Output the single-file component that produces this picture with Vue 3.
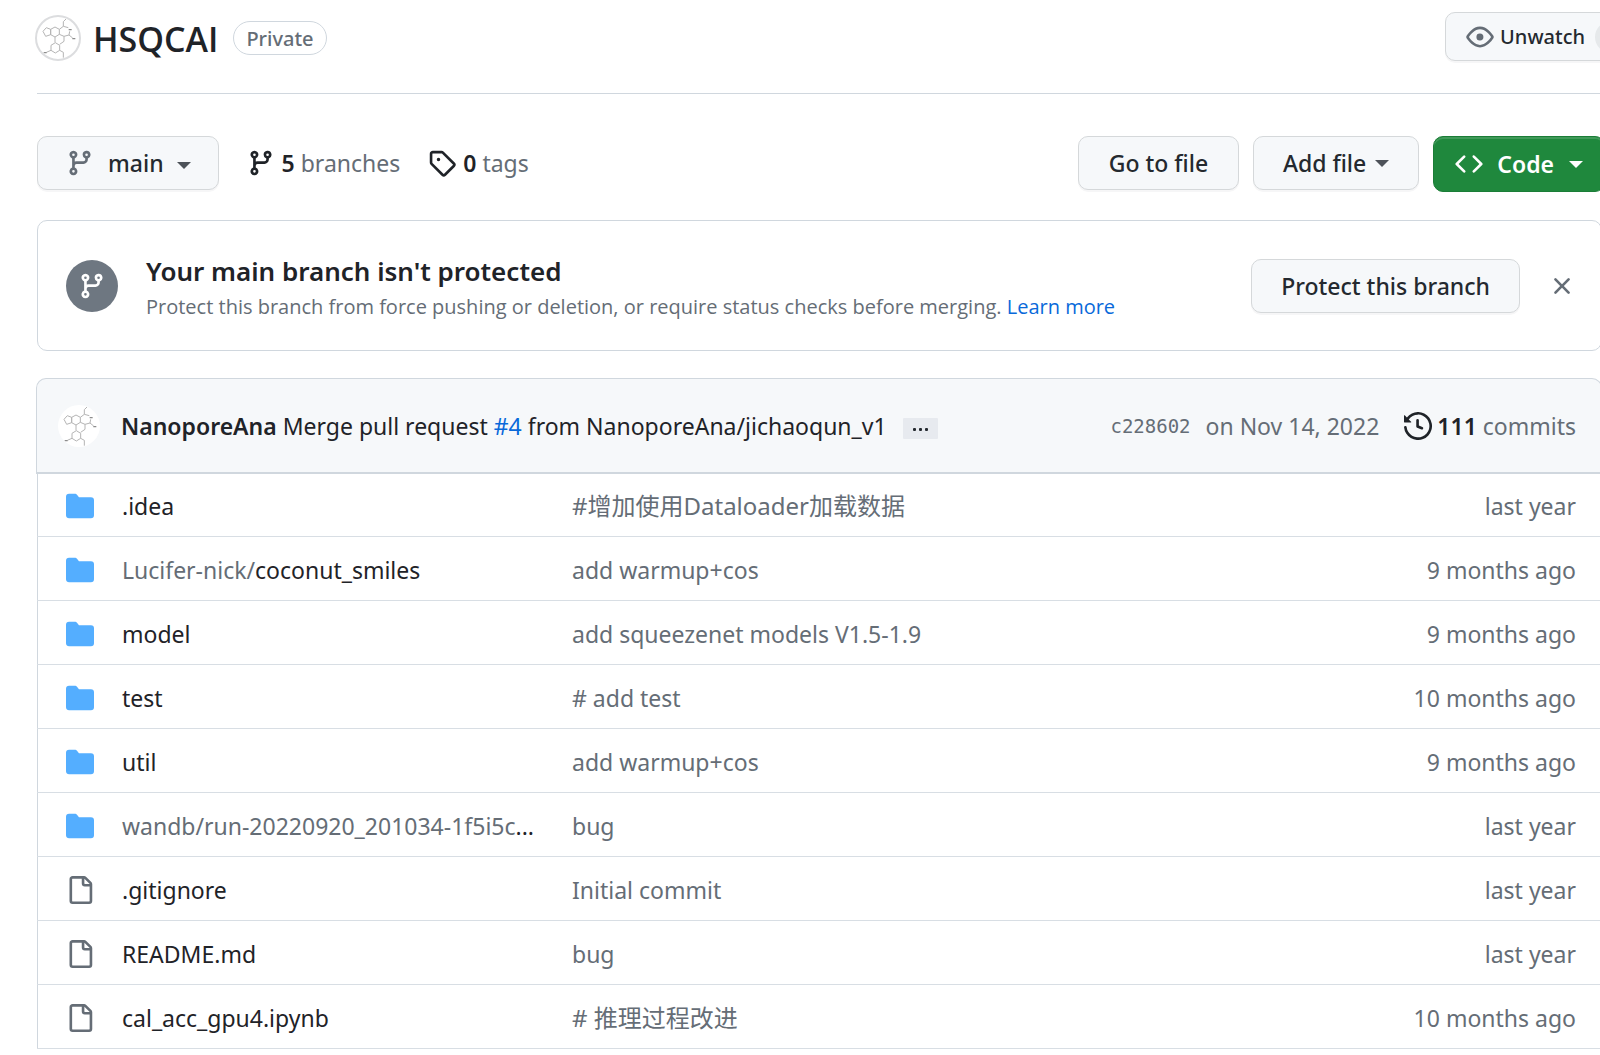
<script setup>
import { h } from 'vue'

const paths = {
  branch: 'M9.5 3.25a2.25 2.25 0 1 1 3 2.122V6A2.5 2.5 0 0 1 10 8.5H6a1 1 0 0 0-1 1v1.128a2.251 2.251 0 1 1-1.5 0V5.372a2.25 2.25 0 1 1 1.5 0v1.836A2.493 2.493 0 0 1 6 7h4a1 1 0 0 0 1-1v-.628A2.25 2.25 0 0 1 9.5 3.25Zm-6 0a.75.75 0 1 0 1.5 0 .75.75 0 0 0-1.5 0Zm8.25-.75a.75.75 0 1 0 0 1.5.75.75 0 0 0 0-1.5ZM4.25 12a.75.75 0 1 0 0 1.5.75.75 0 0 0 0-1.5Z',
  tag: 'M1 7.775V2.75C1 1.784 1.784 1 2.75 1h5.025c.464 0 .91.184 1.238.513l6.25 6.25a1.75 1.75 0 0 1 0 2.474l-5.026 5.026a1.75 1.75 0 0 1-2.474 0l-6.25-6.25A1.752 1.752 0 0 1 1 7.775Zm1.5 0c0 .066.026.13.073.177l6.25 6.25a.25.25 0 0 0 .354 0l5.025-5.025a.25.25 0 0 0 0-.354l-6.25-6.25a.25.25 0 0 0-.177-.073H2.75a.25.25 0 0 0-.25.25ZM6 5a1 1 0 1 1 0 2 1 1 0 0 1 0-2Z',
  eye: 'M8 2c1.981 0 3.671.992 4.933 2.078 1.27 1.091 2.187 2.345 2.637 3.023a1.62 1.62 0 0 1 0 1.798c-.45.678-1.367 1.932-2.637 3.023C11.67 13.008 9.981 14 8 14c-1.981 0-3.671-.992-4.933-2.078C1.797 10.83.88 9.576.43 8.898a1.62 1.62 0 0 1 0-1.798c.45-.677 1.367-1.931 2.637-3.022C4.33 2.992 6.019 2 8 2ZM1.679 7.932a.12.12 0 0 0 0 .136c.411.622 1.241 1.75 2.366 2.717C5.176 11.758 6.527 12.5 8 12.5c1.473 0 2.825-.742 3.955-1.715 1.124-.967 1.954-2.096 2.366-2.717a.12.12 0 0 0 0-.136c-.412-.621-1.242-1.75-2.366-2.717C10.824 4.242 9.473 3.5 8 3.5c-1.473 0-2.825.742-3.955 1.715-1.124.967-1.954 2.096-2.366 2.717ZM8 10a2 2 0 1 1-.001-3.999A2 2 0 0 1 8 10Z',
  code: 'm11.28 3.22 4.25 4.25a.75.75 0 0 1 0 1.06l-4.25 4.25a.749.749 0 0 1-1.275-.326.749.749 0 0 1 .215-.734L13.94 8l-3.72-3.72a.749.749 0 0 1 .326-1.275.749.749 0 0 1 .734.215Zm-6.56 0a.751.751 0 0 1 1.042.018.751.751 0 0 1 .018 1.042L2.06 8l3.72 3.72a.749.749 0 0 1-.326 1.275.749.749 0 0 1-.734-.215L.47 8.53a.75.75 0 0 1 0-1.06Z',
  history: 'm.427 1.927 1.215 1.215a8.002 8.002 0 1 1-1.6 5.685.75.75 0 1 1 1.493-.154 6.5 6.5 0 1 0 1.18-4.458l1.358 1.358A.25.25 0 0 1 3.896 6H.25A.25.25 0 0 1 0 5.75V2.104a.25.25 0 0 1 .427-.177ZM7.75 4a.75.75 0 0 1 .75.75v2.992l2.028.812a.75.75 0 0 1-.557 1.392l-2.5-1A.751.751 0 0 1 7 8.25v-3.5A.75.75 0 0 1 7.75 4Z',
  x: 'M3.72 3.72a.75.75 0 0 1 1.06 0L8 6.94l3.22-3.22a.749.749 0 0 1 1.275.326.749.749 0 0 1-.215.734L9.06 8l3.22 3.22a.749.749 0 0 1-.326 1.275.749.749 0 0 1-.734-.215L8 9.06l-3.22 3.22a.751.751 0 0 1-1.042-.018.751.751 0 0 1-.018-1.042L6.94 8 3.72 4.78a.75.75 0 0 1 0-1.06Z',
  folder: 'M1.75 1A1.75 1.75 0 0 0 0 2.75v10.5C0 14.216.784 15 1.75 15h12.5A1.75 1.75 0 0 0 16 13.25v-8.5A1.75 1.75 0 0 0 14.25 3H7.5a.25.25 0 0 1-.2-.1l-.9-1.2C6.07 1.26 5.55 1 5 1H1.75Z',
  file: 'M2 1.75C2 .784 2.784 0 3.75 0h6.586c.464 0 .909.184 1.237.513l2.914 2.914c.329.328.513.773.513 1.237v9.586A1.75 1.75 0 0 1 13.25 16h-9.5A1.75 1.75 0 0 1 2 14.25Zm1.75-.25a.25.25 0 0 0-.25.25v12.5c0 .138.112.25.25.25h9.5a.25.25 0 0 0 .25-.25V6h-2.75A1.75 1.75 0 0 1 9 4.25V1.5Zm6.75.062V4.25c0 .138.112.25.25.25h2.688l-.011-.013-2.914-2.914-.013-.011Z',
}

const Icon = (props) =>
  h('svg', { viewBox: '0 0 16 16', width: 28, height: 28, fill: 'currentColor', 'aria-hidden': 'true' }, [
    h('path', { d: paths[props.name] }),
  ])
Icon.props = ['name']

const Molecule = () =>
  h('svg', { viewBox: '24 30 126 126', fill: 'none', stroke: '#b4b4b4', 'stroke-width': 3, 'aria-hidden': 'true' }, [
    h('path', {
      d: 'M65 67 52 62 42 73 50 88 65 83ZM65 67 78 60 91 67V82L78 90 65 83ZM91 67 103 58 118 62M122 73 120 84 105 88 91 82M105 88V103L92 112M78 90V106M66 115 79 107 92 115V130L79 138 66 130ZM103 58V44L111 36M120 84 131 93M66 130 52 136M92 130 103 136V152',
    }),
    h('path', { d: 'M119 68h9M130 95h9M44 137h9', stroke: '#8c8c8c', 'stroke-width': 4 }),
  ])

const rows = [
  { type: 'folder', name: '.idea', message: '#增加使用Dataloader加载数据', lang: 'zh', age: 'last year' },
  { type: 'folder', dim: 'Lucifer-nick/', name: 'coconut_smiles', message: 'add warmup+cos', age: '9 months ago' },
  { type: 'folder', name: 'model', message: 'add squeezenet models V1.5-1.9', age: '9 months ago' },
  { type: 'folder', name: 'test', message: '# add test', age: '10 months ago' },
  { type: 'folder', name: 'util', message: 'add warmup+cos', age: '9 months ago' },
  { type: 'folder', dim: 'wandb/run-20220920_201034-1f5i5c', name: '...', message: 'bug', age: 'last year' },
  { type: 'file', name: '.gitignore', message: 'Initial commit', age: 'last year' },
  { type: 'file', name: 'README.md', message: 'bug', age: 'last year' },
  { type: 'file', name: 'cal_acc_gpu4.ipynb', message: '# 推理过程改进', lang: 'zh', age: '10 months ago' },
]
</script>

<template>
  <div class="page">
    <header class="repo-head">
      <span class="avatar ringed"><Molecule /></span>
      <h1>HSQCAI</h1>
      <span class="badge">Private</span>
      <button class="btn watch" type="button"><Icon name="eye" />Unwatch<span class="counter"></span></button>
    </header>

    <nav class="toolbar">
      <button class="btn ref" type="button"><Icon name="branch" />main<i class="caret"></i></button>
      <a class="stat" href="#branches"><Icon name="branch" /><span><b>5</b> branches</span></a>
      <a class="stat" href="#tags"><Icon name="tag" /><span><b>0</b> tags</span></a>
      <div class="actions">
        <button class="btn" type="button">Go to file</button>
        <button class="btn add" type="button">Add file<i class="caret"></i></button>
        <button class="btn code" type="button"><Icon name="code" />Code<i class="caret"></i></button>
      </div>
    </nav>

    <section class="notice">
      <span class="disc"><Icon name="branch" /></span>
      <div class="notice-text">
        <h2>Your main branch isn't protected</h2>
        <p>Protect this branch from force pushing or deletion, or require status checks before merging. <a href="#learn">Learn more</a></p>
      </div>
      <button class="btn" type="button">Protect this branch</button>
      <button class="close" type="button" aria-label="Dismiss"><Icon name="x" /></button>
    </section>

    <section class="files">
      <div class="commit">
        <span class="avatar"><Molecule /></span>
        <p><b>NanoporeAna</b> Merge pull request <a href="#4">#4</a> from NanoporeAna/jichaoqun_v1</p>
        <button class="more" type="button" aria-label="Show description"><i></i><i></i><i></i></button>
        <span class="meta"><code>c228602</code><span>on Nov 14, 2022</span></span>
        <a class="stat commits" href="#commits"><Icon name="history" /><span><b>111</b> commits</span></a>
      </div>
      <table>
        <tbody>
          <tr v-for="row in rows" :key="row.name">
            <td class="kind" :class="row.type"><Icon :name="row.type" /></td>
            <td class="name"><a href="#file"><span v-if="row.dim" class="dim">{{ row.dim }}</span>{{ row.name }}</a></td>
            <td class="message" :lang="row.lang">{{ row.message }}</td>
            <td class="age">{{ row.age }}</td>
          </tr>
        </tbody>
      </table>
    </section>
  </div>
</template>

<style>
body {
  margin: 0;
  background: #fff;
  overflow: hidden;
}
</style>

<style scoped>
.page {
  min-height: 100vh;
  overflow: hidden;
  box-sizing: border-box;
  padding-left: 37px;
  color: #1f2328;
  font: 23px/36px "Noto Sans", "Noto Sans CJK SC", sans-serif;
  white-space: nowrap;
}
svg {
  flex: none;
  display: block;
}
h1, h2, p {
  margin: 0;
}
a {
  color: #0969da;
  text-decoration: none;
}
b {
  font-weight: 600;
}
.btn {
  display: flex;
  align-items: center;
  box-sizing: border-box;
  height: 54px;
  padding: 0 29px;
  border: 1px solid #d5d8da;
  border-radius: 10px;
  background: #f6f8fa;
  box-shadow: 0 2px 0 rgba(31, 35, 40, 0.04);
  color: #24292f;
  font: inherit;
  font-weight: 500;
}
.btn svg {
  color: #656d76;
}
.caret {
  border: 7px solid transparent;
  border-top-color: #4d5259;
  border-bottom: 0;
}
.avatar {
  flex: none;
  width: 42px;
  height: 42px;
  border-radius: 50%;
  overflow: hidden;
  background: #fff;
}
.ringed {
  border: 2px solid #dcdddf;
}

.repo-head {
  display: flex;
  align-items: center;
  height: 94px;
  padding-bottom: 17px;
  box-sizing: border-box;
  border-bottom: 1px solid #d0d7de;
}
.repo-head .avatar {
  margin-left: -2px;
}
h1 {
  margin-left: 12px;
  padding-top: 2px;
  font: 600 34px/36px "Open Sans", sans-serif;
}
.badge {
  margin-left: 15px;
  padding: 1px 12px 0;
  border: 1px solid #d0d7de;
  border-radius: 17px;
  color: #656d76;
  font-size: 20px;
  line-height: 31px;
  font-weight: 500;
}
.watch {
  height: 49px;
  margin: 0 -66px 3px auto;
  padding: 0 20px;
  font-size: 20px;
  gap: 6px;
}
.counter {
  width: 50px;
  height: 32px;
  margin-left: 4px;
  border-radius: 16px;
  background: #e6e9eb;
}

.toolbar {
  display: flex;
  align-items: flex-start;
  padding: 42px 0 28px;
}
.ref {
  padding: 0 27px 0 28px;
}
.ref svg {
  margin-right: 14px;
}
.ref .caret {
  margin: 4px 0 0 13px;
}
.stat {
  display: flex;
  align-items: center;
  height: 54px;
  gap: 7px;
  margin-left: 28px;
  color: #656d76;
}
.stat svg,
.stat b {
  color: #1f2328;
}
.actions {
  display: flex;
  gap: 14px;
  margin: 0 -5px 0 auto;
}
.actions .btn {
  padding: 0 29px;
  min-width: 161px;
  justify-content: center;
}
.actions .add {
  min-width: 166px;
}
.add .caret {
  margin-left: 9px;
}
.actions .code {
  height: 56px;
  padding: 0 21px;
  border-color: #1b7d37;
  background: #1f883d;
  box-shadow: inset 0 2px 0 rgba(255, 255, 255, 0.15);
  color: #fff;
  font-weight: 600;
}
.code svg {
  margin-right: 14px;
  color: #fff;
}
.code .caret {
  margin-left: 15px;
  border-top-color: #fff;
}

.notice {
  display: flex;
  align-items: center;
  box-sizing: border-box;
  height: 131px;
  margin-right: -2px;
  padding: 0 25px 0 28px;
  border: 1px solid #d0d7de;
  border-radius: 10px;
}
.disc {
  display: grid;
  place-items: center;
  width: 52px;
  height: 52px;
  border-radius: 50%;
  background: #6e7781;
  color: #fff;
}
.notice-text {
  margin: 0 auto 0 28px;
  padding-top: 3px;
}
h2 {
  font-size: 26px;
  line-height: 40px;
  font-weight: 600;
}
.notice p {
  color: #656d76;
  font: 20px/32px "Open Sans", sans-serif;
}
.close {
  margin-left: 28px;
  padding: 0;
  border: 0;
  background: none;
  color: #656d76;
}

.files {
  margin: 27px -2px 0 0;
}
.commit {
  display: flex;
  align-items: center;
  box-sizing: border-box;
  height: 96px;
  margin-left: -1px;
  padding: 1px 25px 0 21px;
  border: 1px solid #d0d7de;
  border-bottom-width: 2px;
  border-radius: 10px 10px 0 0;
  background: #f6f8fa;
}
.commit p {
  margin-left: 21px;
}
.more {
  display: flex;
  align-items: center;
  justify-content: center;
  gap: 3px;
  width: 35px;
  height: 21px;
  margin: 4px auto 0 16px;
  padding: 3px 0 0;
  border: 0;
  border-radius: 1px;
  background: #e7eaef;
}
.more i {
  width: 3px;
  height: 3px;
  border-radius: 1px;
  background: #24292f;
}
.meta {
  display: flex;
  align-items: center;
  gap: 15px;
  color: #656d76;
}
.commits {
  gap: 5px;
  margin-left: 25px;
}
code {
  font: 19px/36px "DejaVu Sans Mono", monospace;
}

table {
  width: 100%;
  table-layout: fixed;
  border-collapse: collapse;
  border-left: 1px solid #d0d7de;
}
td {
  height: 61px;
  padding: 2px 0 0;
  border-bottom: 1px solid #d8dee4;
  color: #656d76;
}
tr:first-child td {
  height: 60px;
}
.kind {
  width: 84px;
}
.kind svg {
  margin-left: 28px;
}
td.folder {
  color: #54aeff;
}
.name {
  width: 450px;
}
.name a {
  color: #1f2328;
}
.name .dim {
  color: #656d76;
}
.message:lang(zh) {
  font-size: 24px;
}
.age {
  width: 240px;
  padding-right: 26px;
  text-align: right;
}
</style>
